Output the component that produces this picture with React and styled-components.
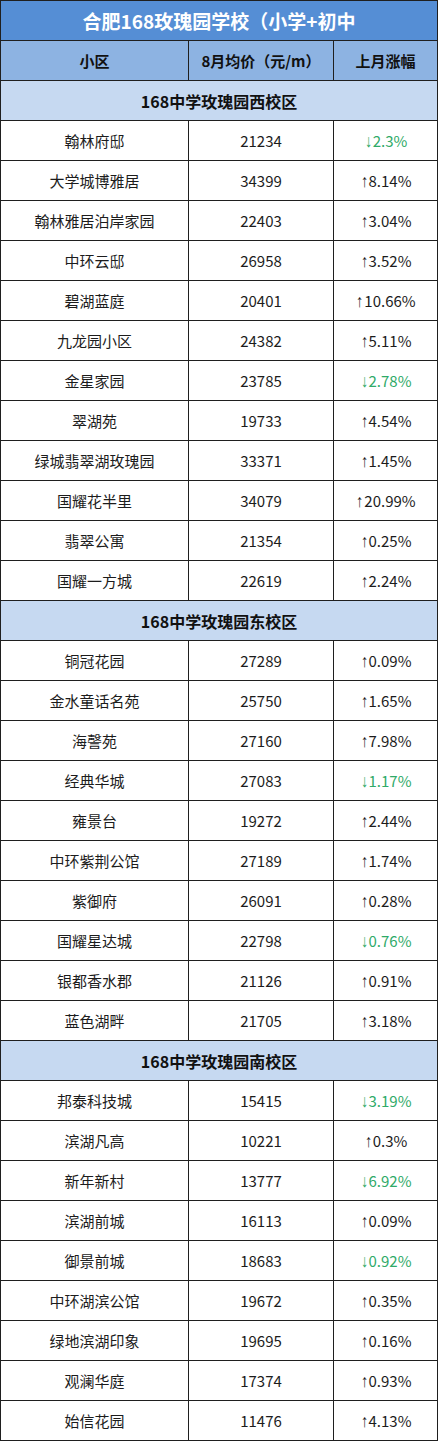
import React from "react";
import styled, { createGlobalStyle } from "styled-components";

const Global = createGlobalStyle`
  html, body { margin: 0; padding: 0; background: #ffffff; }
  body { font-family: "Noto Sans CJK SC", "Noto Sans", sans-serif; }
`;

const Table = styled.div`
  display: grid;
  grid-template-columns: 187px 144px 103px;
  grid-auto-rows: 39px;
  gap: 1px;
  padding: 1px;
  background: #1f1f1f;
  box-sizing: content-box;
  width: 436px;
`;

const Title = styled.div`
  grid-column: 1 / -1;
  background: #558ed5;
  color: #ffffff;
  font-weight: 700;
  font-size: 19px;
  display: flex;
  align-items: center;
  justify-content: center;
`;

const HeadCell = styled.div`
  background: #8db3e2;
  color: #111;
  font-weight: 700;
  font-size: 15px;
  display: flex;
  align-items: center;
  justify-content: center;
`;

const Section = styled.div`
  grid-column: 1 / -1;
  background: #c6d9f1;
  color: #111;
  font-weight: 700;
  font-size: 16px;
  display: flex;
  align-items: center;
  justify-content: center;
`;

const Cell = styled.div`
  background: #ffffff;
  color: ${(p) => (p.$down ? "#2faa68" : "#1c1c1c")};
  font-size: 15px;
  display: flex;
  align-items: center;
  justify-content: center;
`;

const Arrow = styled.span`
  font-family: "Liberation Sans", sans-serif;
  font-size: 18px;
  line-height: 1;
  display: inline-block;
  transform: scaleX(0.8);
  margin-right: 0px;
`;

const data = [
  {
    name: "168中学玫瑰园西校区",
    rows: [
      ["翰林府邸", "21234", "2.3%", true],
      ["大学城博雅居", "34399", "8.14%"],
      ["翰林雅居泊岸家园", "22403", "3.04%"],
      ["中环云邸", "26958", "3.52%"],
      ["碧湖蓝庭", "20401", "10.66%"],
      ["九龙园小区", "24382", "5.11%"],
      ["金星家园", "23785", "2.78%", true],
      ["翠湖苑", "19733", "4.54%"],
      ["绿城翡翠湖玫瑰园", "33371", "1.45%"],
      ["国耀花半里", "34079", "20.99%"],
      ["翡翠公寓", "21354", "0.25%"],
      ["国耀一方城", "22619", "2.24%"],
    ],
  },
  {
    name: "168中学玫瑰园东校区",
    rows: [
      ["铜冠花园", "27289", "0.09%"],
      ["金水童话名苑", "25750", "1.65%"],
      ["海謦苑", "27160", "7.98%"],
      ["经典华城", "27083", "1.17%", true],
      ["雍景台", "19272", "2.44%"],
      ["中环紫荆公馆", "27189", "1.74%"],
      ["紫御府", "26091", "0.28%"],
      ["国耀星达城", "22798", "0.76%", true],
      ["银都香水郡", "21126", "0.91%"],
      ["蓝色湖畔", "21705", "3.18%"],
    ],
  },
  {
    name: "168中学玫瑰园南校区",
    rows: [
      ["邦泰科技城", "15415", "3.19%", true],
      ["滨湖凡高", "10221", "0.3%"],
      ["新年新村", "13777", "6.92%", true],
      ["滨湖前城", "16113", "0.09%"],
      ["御景前城", "18683", "0.92%", true],
      ["中环湖滨公馆", "19672", "0.35%"],
      ["绿地滨湖印象", "19695", "0.16%"],
      ["观澜华庭", "17374", "0.93%"],
      ["始信花园", "11476", "4.13%"],
    ],
  },
];

export default function App() {
  return (
    <>
      <Global />
      <Table>
        <Title>合肥168玫瑰园学校（小学+初中</Title>
        <HeadCell>小区</HeadCell>
        <HeadCell>8月均价（元/m）</HeadCell>
        <HeadCell>上月涨幅</HeadCell>
        {data.map((sec) => (
          <React.Fragment key={sec.name}>
            <Section>{sec.name}</Section>
            {sec.rows.map(([n, p, c, down]) => (
              <React.Fragment key={n}>
                <Cell>{n}</Cell>
                <Cell>{p}</Cell>
                <Cell $down={down}>
                  <Arrow>{down ? "↓" : "↑"}</Arrow>
                  {c}
                </Cell>
              </React.Fragment>
            ))}
          </React.Fragment>
        ))}
      </Table>
    </>
  );
}
